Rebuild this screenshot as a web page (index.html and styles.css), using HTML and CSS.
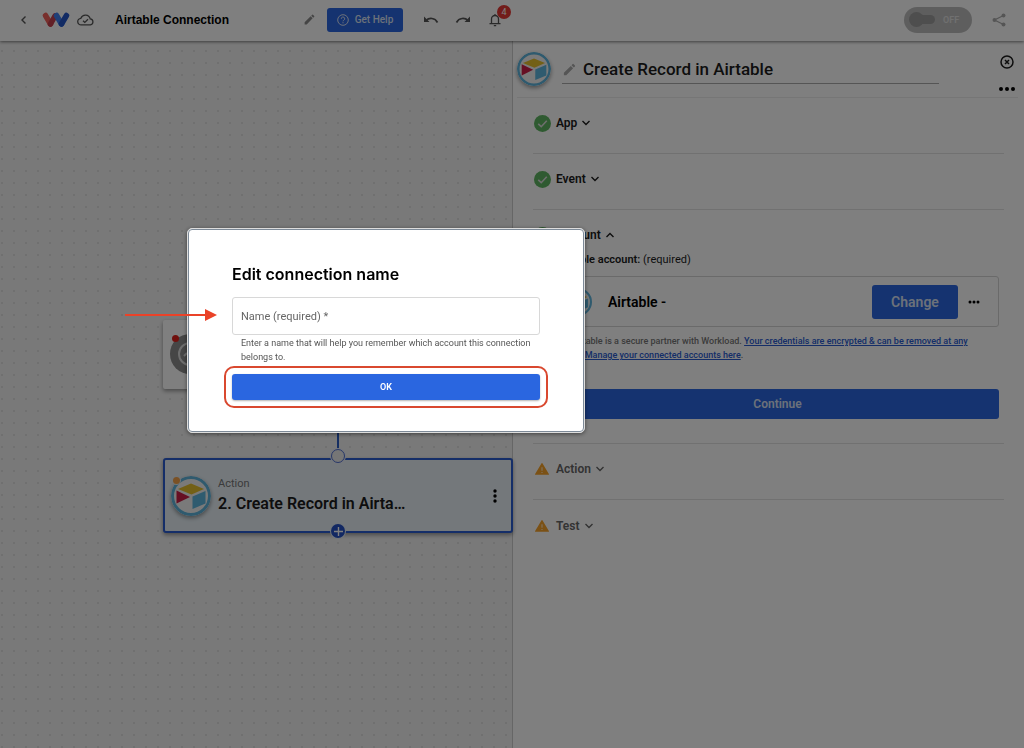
FILE: index.html
```
<!DOCTYPE html>
<html lang="en">
<head>
    <meta charset="UTF-8">
    <meta name="viewport" content="width=device-width, initial-scale=1.0">
    <title>Airtable Connection</title>
    <link rel="stylesheet" href="styles.css">
</head>
<body>
    <!-- shared icons -->
    <svg width="0" height="0" class="sprite" aria-hidden="true">
        <symbol id="pencil" viewBox="0 0 24 24"><path d="M3 17.2V21h3.8L17.8 9.9l-3.7-3.7zM20.7 7a1 1 0 0 0 0-1.4l-2.3-2.3a1 1 0 0 0-1.4 0l-1.8 1.8 3.7 3.7z"/></symbol>
        <symbol id="chevron" viewBox="0 0 10 10"><path d="M1.500 3l3.500 3.500L8.500 3" fill="none" stroke="currentColor" stroke-width="1.4"/></symbol>
        <symbol id="check" viewBox="0 0 24 24"><circle cx="12" cy="12" r="12" fill="#5fb562"/><path d="M6 12.500l4.200 4L18 8" fill="none" stroke="#ddd" stroke-width="2.200"/></symbol>
        <symbol id="warning" viewBox="0 0 24 24"><path d="M1 22h22a1 1 0 0 0 .8-1.500L13 2.500a1 1 0 0 0-2 0L.2 20.500A1 1 0 0 0 1 22z" fill="#f7a32b"/><path d="M11 9h2v6h-2zM11 17h2v2h-2z" fill="#fbe3bd"/></symbol>
        <symbol id="airtable" viewBox="0 0 40 40">
            <circle cx="20" cy="20" r="18.500" fill="#f4f4f4" stroke="#5fb4dc" stroke-width="3"/>
            <path d="M7 13L20 7.500l13 5.500-12.500 5.500z" fill="#e6c02c"/>
            <path d="M21.500 20.500L34.500 15v12.500L21.500 33z" fill="#5fb6de"/>
            <path d="M5.500 14.500L19 21 5.500 27.500z" fill="#cc1f47"/>
        </symbol>
    </svg>

    <div class="app">
        <header class="topbar">
            <button class="icon-btn back" aria-label="Back"><svg width="10" height="10" viewBox="0 0 10 10"><path d="M6.500 1.500L3 5l3.500 3.500" fill="none" stroke="currentColor" stroke-width="1.400"/></svg></button>
            <svg class="logo" width="28" height="18" viewBox="0 0 28 18">
                <g fill="none" stroke-linecap="round" stroke-width="5.500">
                    <path d="M3.500 4.500l5 8.500" stroke="#f0605a"/>
                    <path d="M8.500 13L13 5" stroke="#c4404e"/>
                    <path d="M14.500 4.500l5 8.500" stroke="#3f7ff0"/>
                    <path d="M19.500 13L24.500 4.500" stroke="#2456c9"/>
                </g>
            </svg>
            <svg class="cloud" width="17" height="12" viewBox="0 0 24 17"><path d="M6 15.500a4.700 4.700 0 0 1-.6-9.400A7 7 0 0 1 18.700 7 4.300 4.300 0 0 1 19 15.500zM8.500 9.500l2.500 2.500 4.500-4.500" fill="none" stroke="currentColor" stroke-width="1.800"/></svg>
            <h1 class="workflow-name">Airtable Connection</h1>
            <button class="icon-btn rename" aria-label="Rename"><svg width="13" height="13"><use href="#pencil"/></svg></button>
            <button class="btn help">
                <svg width="12" height="12" viewBox="0 0 12 12" fill="none" stroke="currentColor"><circle cx="6" cy="6" r="5.300"/><path d="M4.300 4.800a1.700 1.700 0 1 1 2.500 1.400c-.6.300-.8.600-.8 1.100M6 8.200v1.100"/></svg>
                Get Help
            </button>
            <button class="icon-btn undo" aria-label="Undo"><svg width="16" height="10" viewBox="0 0 16 10"><path d="M1 1.500v5.500h5.500z" fill="currentColor"/><path d="M3 5.500C6 2.500 12 2.500 14.500 7.500" fill="none" stroke="currentColor" stroke-width="1.700"/></svg></button>
            <button class="icon-btn redo" aria-label="Redo"><svg width="16" height="10" viewBox="0 0 16 10"><path d="M15 1.500v5.500H9.500z" fill="currentColor"/><path d="M13 5.500C10 2.500 4 2.500 1.500 7.500" fill="none" stroke="currentColor" stroke-width="1.700"/></svg></button>
            <button class="icon-btn bell" aria-label="Notifications">
                <svg width="12" height="14" viewBox="0 0 12 14"><path d="M2.500 10.500V6a3.500 3.500 0 0 1 7 0v4.500M.5 10.700h11M6 2.500V1M4.800 12.700h2.400" fill="none" stroke="currentColor" stroke-width="1.300"/></svg>
                <span class="badge">4</span>
            </button>
            <label class="toggle">
                <input type="checkbox" aria-label="Workflow enabled">
                <span class="track"></span>
                OFF
            </label>
            <button class="icon-btn share" aria-label="Share"><svg width="14" height="14" viewBox="0 0 14 14" fill="currentColor"><path d="M11.500 2.500L2.500 7l9 4.500" fill="none" stroke="currentColor" stroke-width="1.300"/><circle cx="11.500" cy="2.500" r="2"/><circle cx="2.500" cy="7" r="2"/><circle cx="11.500" cy="11.500" r="2"/></svg></button>
        </header>

        <main class="workspace">
            <section class="canvas">
                <div class="node trigger">
                    <span class="trigger-icon"><svg width="30" height="30" viewBox="0 0 30 30" fill="none" stroke="#ddd" stroke-width="2"><circle cx="15" cy="15" r="11"/><path d="M15 9v6l4 3M9 17l3-3"/></svg></span>
                    <span class="dot red"></span>
                </div>
                <div class="connector"></div>
                <div class="node action">
                    <span class="node-icon">
                        <svg class="app-logo" width="40" height="40"><use href="#airtable"/></svg>
                        <span class="dot orange"></span>
                    </span>
                    <div class="node-text">
                        <p>Action</p>
                        <h3>2. Create Record in Airta…</h3>
                    </div>
                    <button class="icon-btn kebab" aria-label="Node menu"><svg width="4" height="14" viewBox="0 0 4 14"><circle cx="2" cy="2" r="1.700"/><circle cx="2" cy="7" r="1.700"/><circle cx="2" cy="12" r="1.700"/></svg></button>
                    <span class="port"></span>
                    <button class="add" aria-label="Add step"><svg width="9" height="9" viewBox="0 0 9 9"><path d="M4.500 0v9M0 4.500h9" stroke="currentColor" stroke-width="1.400"/></svg></button>
                </div>
            </section>

            <aside class="panel">
                <div class="panel-head">
                    <svg class="app-logo" width="34" height="34"><use href="#airtable"/></svg>
                    <div class="panel-title">
                        <svg width="15" height="15"><use href="#pencil"/></svg>
                        <h2>Create Record in Airtable</h2>
                    </div>
                    <div class="panel-tools">
                        <button class="icon-btn" aria-label="Close"><svg width="14" height="14" viewBox="0 0 14 14" fill="none" stroke="currentColor"><circle cx="7" cy="7" r="6" stroke-width="1.500"/><path d="M5 5l4 4M9 5L5 9" stroke-width="1.500"/></svg></button>
                        <button class="icon-btn" aria-label="More"><svg width="16" height="4" viewBox="0 0 16 4"><circle cx="2" cy="2" r="2"/><circle cx="8" cy="2" r="2"/><circle cx="14" cy="2" r="2"/></svg></button>
                    </div>
                </div>

                <div class="steps">
                    <button class="step"><svg width="17" height="17"><use href="#check"/></svg>App <svg class="chev" width="10" height="10"><use href="#chevron"/></svg></button>
                    <button class="step"><svg width="17" height="17"><use href="#check"/></svg>Event <svg class="chev" width="10" height="10"><use href="#chevron"/></svg></button>
                    <div class="account">
                        <button class="step open"><svg width="17" height="17"><use href="#check"/></svg>Account <svg class="chev" width="10" height="10"><use href="#chevron"/></svg></button>
                        <div class="account-body">
                            <p class="account-label"><b>Airtable account:</b> (required)</p>
                            <div class="account-card">
                                <svg width="28" height="28"><use href="#airtable"/></svg>
                                <span class="account-name">Airtable -</span>
                                <button class="btn change">Change</button>
                                <button class="icon-btn" aria-label="Account menu"><svg width="12" height="4" viewBox="0 0 12 4"><circle cx="2" cy="2" r="1.500"/><circle cx="6" cy="2" r="1.500"/><circle cx="10" cy="2" r="1.500"/></svg></button>
                            </div>
                            <p class="account-note">Airtable is a secure partner with Workload. <a href="#">Your credentials are encrypted &amp; can be removed at any<br>time.</a> <a href="#">Manage your connected accounts here</a>.</p>
                            <button class="btn continue">Continue</button>
                        </div>
                    </div>
                    <button class="step pending"><svg width="14" height="14"><use href="#warning"/></svg>Action <svg class="chev" width="10" height="10"><use href="#chevron"/></svg></button>
                    <button class="step pending"><svg width="14" height="14"><use href="#warning"/></svg>Test <svg class="chev" width="10" height="10"><use href="#chevron"/></svg></button>
                </div>
            </aside>
        </main>
    </div>

    <div class="backdrop">
        <form class="dialog" role="dialog" aria-labelledby="dialog-title">
            <h2 id="dialog-title">Edit connection name</h2>
            <input type="text" class="field" id="name" placeholder="Name (required) *" aria-label="Name (required)" aria-describedby="name-hint">
            <p class="hint" id="name-hint">Enter a name that will help you remember which account this connection belongs to.</p>
            <div class="ok-wrap">
                <button type="button" class="btn ok">OK</button>
            </div>
            <svg class="arrow" width="92" height="12" viewBox="0 0 92 12"><path d="M0 6h82" stroke="#ea4228" stroke-width="2"/><path d="M80 0l12 6-12 6z" fill="#ea4228"/></svg>
        </form>
    </div>
</body>
</html>
```
FILE: styles.css
```
* {
    margin: 0;
    padding: 0;
    box-sizing: border-box;
}

body {
    font-family: Roboto, "Liberation Sans", sans-serif;
    font-size: 12px;
    color: #1c1c1c;
    background: #ffffff;
}

button {
    font: inherit;
    color: inherit;
    background: none;
    border: 0;
    cursor: pointer;
}

svg {
    display: block;
    flex-shrink: 0;
}

.sprite {
    position: absolute;
}

.app {
    display: flex;
    flex-direction: column;
    min-height: 100vh;
}

/* top bar */
.topbar {
    display: flex;
    align-items: center;
    height: 41px;
    padding: 0 18px 2px 19px;
    background: #ffffff;
    box-shadow: 0 1px 3px rgba(0, 0, 0, 0.5);
    position: relative;
    z-index: 1;
}

.icon-btn {
    display: flex;
    align-items: center;
    justify-content: center;
}

.back,
.undo,
.redo,
.bell,
.cloud {
    color: #555555;
}

.logo {
    margin-left: 13px;
}

.cloud {
    margin-left: 7px;
}

.workflow-name {
    width: 188px;
    margin-left: 21px;
    font-family: "Liberation Sans", Arial, sans-serif;
    font-size: 12px;
    font-weight: 700;
    color: #000000;
}

.rename {
    fill: #8a8a8a;
}

.btn {
    display: flex;
    align-items: center;
    justify-content: center;
    font-weight: 600;
    color: #ffffff;
    background: #2a66e0;
    border-radius: 3px;
}

.help {
    gap: 6px;
    width: 76px;
    height: 24px;
    margin-left: 11px;
    font-size: 10px;
    font-weight: 500;
    color: #d8e2f5;
}

.undo {
    margin-left: 20px;
}

.redo {
    margin-left: 16px;
}

.bell {
    position: relative;
    margin-left: 18px;
}

.badge {
    position: absolute;
    left: 8px;
    top: -8px;
    width: 14px;
    height: 14px;
    border-radius: 50%;
    font-size: 9px;
    line-height: 14px;
    color: #ffffff;
    background: #e53935;
}

.toggle {
    display: flex;
    align-items: center;
    gap: 8px;
    width: 68px;
    height: 26px;
    margin-left: auto;
    padding-left: 7px;
    border-radius: 13px;
    font-size: 9px;
    font-weight: 600;
    color: #e0e0e0;
    background: #bdbdbd;
}

.toggle input {
    position: absolute;
    opacity: 0;
}

.track {
    position: relative;
    width: 24px;
    height: 9px;
    border-radius: 5px;
    background: #9c9c9c;
}

.track::before {
    content: "";
    position: absolute;
    left: -2px;
    top: -3px;
    width: 15px;
    height: 15px;
    border-radius: 50%;
    background: #9c9c9c;
}

.share {
    margin-left: 20px;
    color: #aaaaaa;
}

/* canvas */
.workspace {
    flex: 1;
    display: flex;
}

.canvas {
    position: relative;
    flex: 1;
    background: #f3f3f3 radial-gradient(circle, #e0e0e0 1px, transparent 1px) 8px 4px / 12px 12px;
}

.node {
    position: absolute;
    left: 163px;
    width: 350px;
    background: #ffffff;
    box-shadow: 0 2px 4px rgba(0, 0, 0, 0.4);
}

.trigger {
    top: 279px;
    height: 69px;
    border-radius: 2px;
}

.trigger-icon {
    position: absolute;
    left: 7px;
    top: 14px;
    padding: 5px;
    border-radius: 50%;
    background: #8c8c8c;
}

.dot {
    position: absolute;
    width: 7px;
    height: 7px;
    border-radius: 50%;
}

.dot.red {
    left: 9px;
    top: 15px;
    background: #e0201b;
}

.dot.orange {
    left: 2px;
    top: 1px;
    background: #f5a34a;
    box-shadow: 0 0 0 1px #e4eef5;
}

.connector {
    position: absolute;
    left: 337px;
    top: 348px;
    width: 2px;
    height: 70px;
    background: #2a5cc4;
}

.action {
    top: 417px;
    display: flex;
    align-items: center;
    height: 75px;
    padding: 0 14px 0 6px;
    border: 2px solid #2a5cd0;
    border-radius: 3px;
    background: #e8f1f7;
}

.node-icon {
    position: relative;
}

.app-logo {
    border-radius: 50%;
    box-shadow: 0 2px 4px rgba(0, 0, 0, 0.4);
}

.node-text {
    flex: 1;
    margin-left: 7px;
}

.node-text p {
    font-size: 11px;
    line-height: 16px;
    color: #777777;
}

.node-text h3 {
    font-size: 16px;
    font-weight: 600;
    line-height: 24px;
}

.port,
.add {
    position: absolute;
    left: 166px;
    width: 14px;
    height: 14px;
    border-radius: 50%;
}

.port {
    top: -11px;
    border: 1px solid #4f6fd0;
    background: #ececec;
    box-shadow: 0 0 0 1px #e8edf8;
}

.add {
    bottom: -7px;
    display: flex;
    align-items: center;
    justify-content: center;
    color: #ffffff;
    background: #2450c4;
    box-shadow: 0 0 0 1px #e3edf5;
}

/* side panel */
.panel {
    width: 512px;
    border-left: 1px solid #cccccc;
    background: #ffffff;
}

.panel-head {
    display: flex;
    height: 57px;
    margin: 0 6px 0 4px;
    border-bottom: 1px solid #ececec;
}

.panel-head .app-logo {
    margin-top: 11px;
}

.panel-title {
    display: flex;
    align-items: center;
    gap: 6px;
    flex: 1;
    height: 27px;
    margin: 16px 60px 0 11px;
    padding-bottom: 2px;
    border-bottom: 1px solid #aaaaaa;
    fill: #aaaaaa;
}

.panel-title h2 {
    font-size: 17px;
    font-weight: 500;
}

.panel-tools {
    display: flex;
    flex-direction: column;
    align-items: center;
    gap: 18px;
    padding: 14px 3px 0 0;
}

.steps {
    padding: 0 20px 0 20px;
}

.step {
    display: flex;
    align-items: center;
    gap: 5px;
    width: 100%;
    height: 56px;
    padding: 0 0 5px 1px;
    border-bottom: 1px solid #e2e2e2;
    font-size: 12px;
    font-weight: 600;
}

.step .chev {
    margin-left: -1px;
}

.pending {
    gap: 7px;
    padding-left: 2px;
    color: #666666;
}

.pending .chev {
    margin-left: -3px;
}

.pending:last-child {
    border-bottom: 0;
}

.open {
    height: 38px;
    padding-bottom: 0;
    border-bottom: 0;
}

.open .chev {
    transform: rotate(180deg);
}

.account {
    padding: 6px 5px 24px 0;
    border-bottom: 1px solid #e2e2e2;
}

.account-body {
    margin-left: 23px;
}

.account-label {
    font-size: 11px;
    line-height: 12px;
}

.account-label b {
    font-weight: 600;
}

.account-card {
    display: flex;
    align-items: center;
    height: 51px;
    margin-top: 10px;
    padding: 0 18px 0 7px;
    border: 1px solid #d4d4d4;
    border-radius: 3px;
}

.account-name {
    flex: 1;
    margin-left: 16px;
    font-size: 14px;
    font-weight: 600;
    color: #000000;
}

.change {
    width: 86px;
    height: 34px;
    margin-right: 10px;
    font-size: 14px;
    color: #d8e2f5;
}

.account-note {
    margin: 7px 0 27px 6px;
    font-size: 9px;
    font-weight: 500;
    line-height: 14px;
    text-indent: 9px;
    color: #777777;
}

.account-note a {
    color: #2a5cd0;
}

.continue {
    width: 100%;
    height: 30px;
    font-size: 12px;
    color: #d8e2f5;
}

/* dialog */
.backdrop {
    position: fixed;
    inset: 0;
    z-index: 2;
    padding: 228px 0 0 187px;
    background: rgba(0, 0, 0, 0.5);
}

.dialog {
    position: relative;
    width: 398px;
    padding: 33px 44px 32px;
    border: 1px solid #dddddd;
    outline: 1px solid #7d8a98;
    outline-offset: -2px;
    border-radius: 5px;
    background: #ffffff;
    box-shadow: 0 1px 4px rgba(0, 0, 0, 0.5);
}

.dialog h2 {
    font-family: Inter, "Liberation Sans", sans-serif;
    font-size: 16px;
    font-weight: 600;
    line-height: 24px;
    color: #000000;
}

.field {
    display: block;
    width: 100%;
    height: 38px;
    margin-top: 11px;
    padding: 0 8px;
    border: 1px solid #d8d8d8;
    border-radius: 3px;
    font: 11px Roboto, "Liberation Sans", sans-serif;
    color: #222222;
}

.field::placeholder {
    color: #666666;
}

.hint {
    margin: 1px 0 10px 9px;
    font-size: 9px;
    line-height: 14px;
    color: #555555;
}

.ok-wrap {
    position: relative;
}

.ok-wrap::after {
    content: "";
    position: absolute;
    inset: -8px;
    border: 2px solid #d9482f;
    border-radius: 10px;
    pointer-events: none;
}

.ok {
    width: 100%;
    height: 26px;
    font-size: 9px;
    box-shadow: 0 1px 2px rgba(0, 0, 0, 0.3);
}

.arrow {
    position: absolute;
    left: -63px;
    top: 80px;
}
```
